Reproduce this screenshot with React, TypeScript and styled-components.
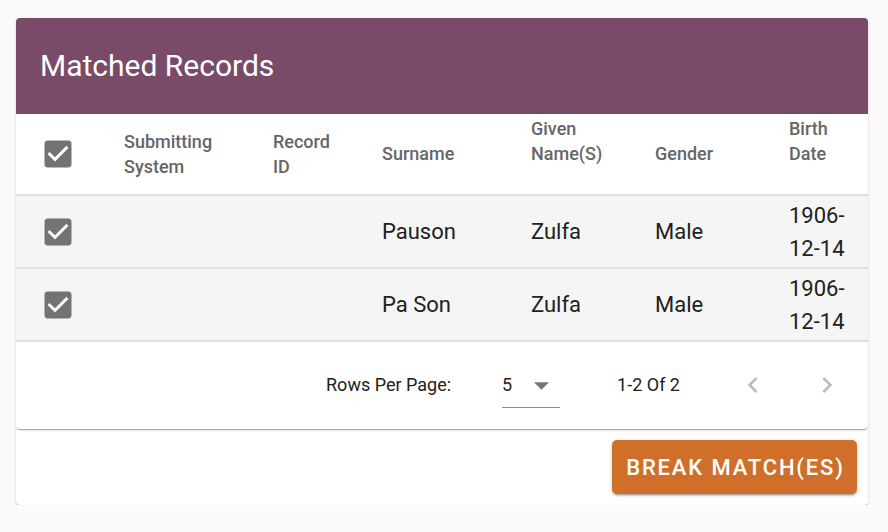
import React from "react";
import styled, { createGlobalStyle } from "styled-components";

const GlobalStyle = createGlobalStyle`
  html, body { margin: 0; padding: 0; background: #fafafa; }
  body { font-family: Roboto, "Noto Sans", "Liberation Sans", sans-serif; }
  * { box-sizing: border-box; }
`;

const Page = styled.div`
  padding: 18px 20px 0 16px;
`;

const Card = styled.section`
  background: #fff;
  border-radius: 4px;
  box-shadow: 0 2px 1px -1px rgba(0,0,0,0.2), 0 1px 1px 0 rgba(0,0,0,0.14), 0 1px 3px 0 rgba(0,0,0,0.12);
  overflow: hidden;
`;

const Header = styled.header`
  height: 96px;
  background: #7a4a69;
  display: flex;
  align-items: center;
  padding: 0 24px;
`;

const Title = styled.h1`
  margin: 0;
  font-size: 30px;
  font-weight: 400;
  color: #fff;
  line-height: 1;
`;

const TablePaper = styled.div`
  background: #fff;
  border-radius: 4px;
  box-shadow: 0 2px 1px -1px rgba(0,0,0,0.2), 0 1px 1px 0 rgba(0,0,0,0.14), 0 1px 3px 0 rgba(0,0,0,0.12);
  position: relative;
`;

const Table = styled.table`
  width: 100%;
  border-collapse: collapse;
  table-layout: fixed;
`;

const HeadRow = styled.tr`
  height: 81px;
  border-bottom: 2px solid #e0e0e0;
`;

const BodyRow = styled.tr`
  height: 73px;
  background: #f5f5f5;
  border-bottom: 2px solid #e0e0e0;
`;

const HeadCell = styled.th`
  text-align: left;
  vertical-align: middle;
  padding: 0 16px;
  font-size: 18px;
  font-weight: 500;
  line-height: 25.5px;
  color: #666;
`;

/* invisible sort-direction icon slot, as in a sortable column header */
const SortSlot = styled.span`
  display: inline-block;
  width: 28px;
  height: 18px;
  vertical-align: middle;
  visibility: hidden;
`;

const Cell = styled.td`
  padding: 0 16px;
  font-size: 22px;
  line-height: 33px;
  color: #212121;
  vertical-align: middle;
`;

const CheckCell = styled.td`
  padding: 0 0 0 24px;
  vertical-align: middle;
`;

const CheckHead = styled.th`
  padding: 0 0 0 24px;
  vertical-align: middle;
  text-align: left;
`;

const CheckIcon = styled.svg`
  display: block;
  width: 36px;
  height: 36px;
  fill: #737373;
`;

const Checkbox = () => (
  <CheckIcon viewBox="0 0 24 24">
    <path d="M19 3H5c-1.11 0-2 .9-2 2v14c0 1.1.89 2 2 2h14c1.11 0 2-.9 2-2V5c0-1.1-.89-2-2-2zm-9 14l-5-5 1.41-1.41L10 14.17l7.59-7.59L19 8l-9 9z" />
  </CheckIcon>
);

const Toolbar = styled.div`
  height: 87px;
  display: flex;
  align-items: center;
  justify-content: flex-end;
  padding-right: 25px;
  padding-bottom: 2px;
  font-size: 18px;
  color: #212121;
`;

const Label = styled.span`
  margin-right: 51px;
`;

const Select = styled.div`
  width: 58px;
  height: 34px;
  margin-top: 12px;
  display: flex;
  align-items: flex-start;
  justify-content: space-between;
  padding-right: 11px;
  border-bottom: 1px solid #8c8c8c;
  font-size: 18px;
  margin-right: 57px;
`;

const SelectValue = styled.span`
  line-height: 1;
  margin-top: 2px;
`;

const Arrow = styled.svg`
  width: 15px;
  height: 8px;
  margin-top: 8px;
  fill: #757575;
`;

const Displayed = styled.span`
  margin-right: 57px;
`;

const PageButton = styled.svg<{ $gap?: number }>`
  width: 32px;
  height: 32px;
  fill: #bdbdbd;
  margin-left: ${(p) => p.$gap ?? 0}px;
`;

const Actions = styled.div`
  display: flex;
  justify-content: flex-end;
  padding: 11px 11px 11px;
`;

const Button = styled.button`
  height: 54px;
  width: 245px;
  border: none;
  border-radius: 5px;
  background: #cf6f29;
  color: #fff;
  font-family: Roboto, "Noto Sans", "Liberation Sans", sans-serif;
  font-size: 22px;
  font-weight: 500;
  letter-spacing: 1.85px;
  text-transform: uppercase;
  padding: 0 0 0 2px;
  box-shadow: 0 3px 1px -2px rgba(0,0,0,0.2), 0 2px 2px 0 rgba(0,0,0,0.14), 0 1px 5px 0 rgba(0,0,0,0.12);
  cursor: pointer;
`;

const columns = ["Submitting System", "Record ID", "Surname", "Given Name(S)", "Gender", "Birth Date"];

const rows = [
  { surname: "Pauson", given: "Zulfa", gender: "Male", birth: "1906-12-14" },
  { surname: "Pa Son", given: "Zulfa", gender: "Male", birth: "1906-12-14" },
];

export default function App() {
  return (
    <Page>
      <GlobalStyle />
      <Card>
        <Header>
          <Title>Matched Records</Title>
        </Header>
        <TablePaper>
          <Table>
            <colgroup>
              <col style={{ width: 92 }} />
              <col style={{ width: 149 }} />
              <col style={{ width: 109 }} />
              <col style={{ width: 149 }} />
              <col style={{ width: 124 }} />
              <col style={{ width: 134 }} />
              <col style={{ width: 95 }} />
            </colgroup>
            <thead>
              <HeadRow>
                <CheckHead>
                  <Checkbox />
                </CheckHead>
                {columns.map((c) => (
                  <HeadCell key={c}>
                    {c}
                    <SortSlot />
                  </HeadCell>
                ))}
              </HeadRow>
            </thead>
            <tbody>
              {rows.map((r, i) => (
                <BodyRow key={i}>
                  <CheckCell>
                    <Checkbox />
                  </CheckCell>
                  <Cell />
                  <Cell />
                  <Cell>{r.surname}</Cell>
                  <Cell>{r.given}</Cell>
                  <Cell>{r.gender}</Cell>
                  <Cell>{r.birth}</Cell>
                </BodyRow>
              ))}
            </tbody>
          </Table>
          <Toolbar>
            <Label>Rows Per Page:</Label>
            <Select>
              <SelectValue>5</SelectValue>
              <Arrow viewBox="0 0 10 5">
                <path d="M0 0l5 5 5-5z" />
              </Arrow>
            </Select>
            <Displayed>1-2 Of 2</Displayed>
            <PageButton viewBox="0 0 24 24">
              <path d="M15.41 7.41 14 6l-6 6 6 6 1.41-1.41L10.83 12z" />
            </PageButton>
            <PageButton viewBox="0 0 24 24" $gap={42}>
              <path d="M10 6 8.59 7.41 13.17 12l-4.58 4.59L10 18l6-6z" />
            </PageButton>
          </Toolbar>
        </TablePaper>
        <Actions>
          <Button>Break Match(es)</Button>
        </Actions>
      </Card>
    </Page>
  );
}
